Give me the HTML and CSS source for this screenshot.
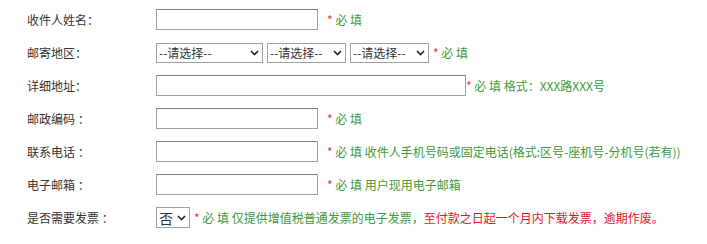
FILE: index.html
```html
<!DOCTYPE html>
<html lang="zh-CN">
<head>
    <meta charset="UTF-8">
    <title>收货信息</title>
    <link rel="stylesheet" href="styles.css">
</head>
<body>
    <div class="form">
        <div class="row">
            <label class="label">收件人姓名：</label>
            <input type="text" class="field">
            <span class="tip"><em>*</em> 必 填</span>
        </div>
        <div class="row">
            <label class="label">邮寄地区：</label>
            <select class="sel sel-prov"><option>--请选择--</option></select>
            <select class="sel"><option>--请选择--</option></select>
            <select class="sel"><option>--请选择--</option></select>
            <span class="tip tip-near"><em>*</em> 必 填</span>
        </div>
        <div class="row">
            <label class="label">详细地址：</label>
            <input type="text" class="field field-wide">
            <span class="tip tip-near"><em>*</em> 必 填 格式：XXX路XXX号</span>
        </div>
        <div class="row">
            <label class="label">邮政编码 ：</label>
            <input type="text" class="field">
            <span class="tip"><em>*</em> 必 填</span>
        </div>
        <div class="row">
            <label class="label">联系电话 ：</label>
            <input type="text" class="field">
            <span class="tip"><em>*</em> 必 填 收件人手机号码或固定电话(格式:区号-座机号-分机号(若有))</span>
        </div>
        <div class="row">
            <label class="label">电子邮箱 ：</label>
            <input type="text" class="field">
            <span class="tip"><em>*</em> 必 填 用户现用电子邮箱</span>
        </div>
        <div class="row">
            <label class="label">是否需要发票 ：</label>
            <select class="sel sel-small"><option>否</option><option>是</option></select>
            <span class="tip tip-near"><em>*</em> 必 填 仅提供增值税普通发票的电子发票，<b>至付款之日起一个月内下载发票，逾期作废。</b></span>
        </div>
    </div>
</body>
</html>
```

FILE: styles.css
```css
* {
    margin: 0;
    padding: 0;
    box-sizing: border-box;
}

body {
    font-family: "Microsoft YaHei", "Noto Sans CJK SC", sans-serif;
    font-size: 12px;
    color: #333;
    background: #fff;
}

.form {
    padding: 3px 0 0 27px;
}

.row {
    display: flex;
    align-items: center;
    height: 33px;
}

.label {
    width: 129px;
    flex-shrink: 0;
}

.field {
    width: 162px;
    height: 21px;
    border: 1px solid #a0a0a0;
    border-top-color: #808080;
    background: #fff;
}

.field-wide {
    width: 310px;
}

.sel {
    appearance: none;
    -webkit-appearance: none;
    height: 20px;
    width: 79px;
    margin-right: 4px;
    padding: 0 14px 0 2px;
    border: 1px solid #a0a0a0;
    font-family: "Microsoft YaHei", "Noto Sans CJK SC", sans-serif;
    font-size: 12px;
    color: #333;
    background: #fff url("data:image/svg+xml,%3Csvg xmlns='http://www.w3.org/2000/svg' width='9' height='6' viewBox='0 0 9 6'%3E%3Cpath d='M1 1l3.5 3.5L8 1' fill='none' stroke='%23222' stroke-width='1.6'/%3E%3C/svg%3E") no-repeat right 3px center;
}

.sel-prov {
    width: 107px;
}

.sel-small {
    width: 34px;
    height: 21px;
    font-size: 14px;
    padding-left: 2px;
}

.tip {
    margin-left: 9px;
    color: #3c9a3c;
    white-space: nowrap;
}

.tip-near {
    margin-left: 0;
}

.tip em {
    font-style: normal;
    color: #e33;
}

.tip b {
    font-weight: normal;
    color: #e4141e;
}
```
